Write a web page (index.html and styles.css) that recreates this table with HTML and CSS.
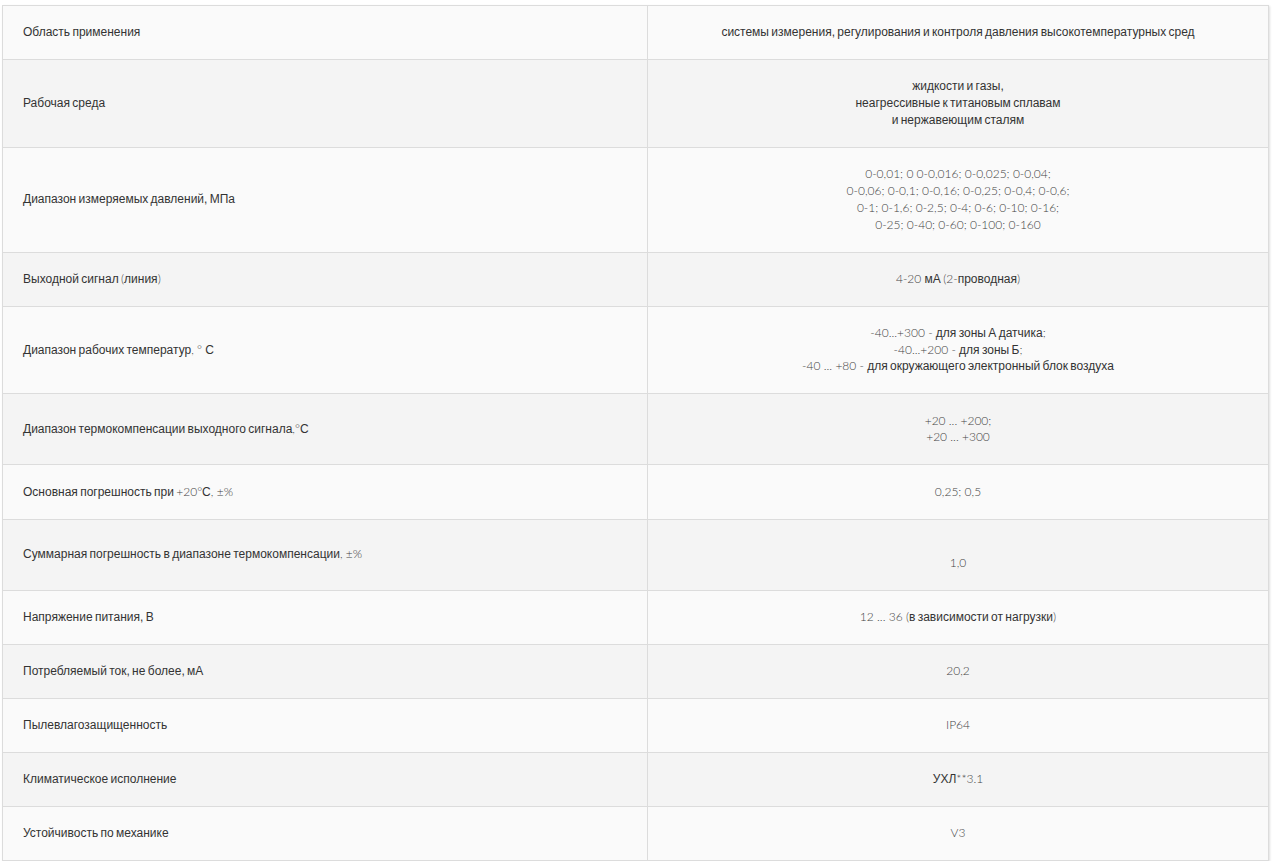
FILE: index.html
```html
<!DOCTYPE html>
<html lang="ru">
<head>
<meta charset="utf-8">
<title>Характеристики</title>
<link rel="stylesheet" href="styles.css">
</head>
<body>
<table class="spec">
<tbody>
<tr><td>Область применения</td><td>системы измерения, регулирования и контроля давления высокотемпературных сред</td></tr>
<tr><td>Рабочая среда</td><td>жидкости и газы,<br>неагрессивные к титановым сплавам<br>и нержавеющим сталям</td></tr>
<tr><td>Диапазон измеряемых давлений, МПа</td><td><span class="n">0-0,01; 0 0-0,016; 0-0,025; 0-0,04;<br>0-0,06; 0-0,1; 0-0,16; 0-0,25; 0-0,4; 0-0,6;<br>0-1; 0-1,6; 0-2,5; 0-4; 0-6; 0-10; 0-16;<br>0-25; 0-40; 0-60; 0-100; 0-160</span></td></tr>
<tr><td>Выходной сигнал <span class="n">(</span>линия<span class="n">)</span></td><td><span class="n">4-20 </span>мА <span class="n">(2-</span>проводная<span class="n">)</span></td></tr>
<tr><td>Диапазон рабочих температур<span class="n">, ° </span>С</td><td><span class="n">-40...+300 - </span>для зоны А датчика<span class="n">;</span><br><span class="n">-40...+200 - </span>для зоны Б<span class="n">;</span><br><span class="n">-40 ... +80 - </span>для окружающего электронный блок воздуха</td></tr>
<tr><td>Диапазон термокомпенсации выходного сигнала<span class="n">,°</span>С</td><td><span class="n">+20 ... +200;<br>+20 ... +300</span></td></tr>
<tr><td>Основная погрешность при <span class="n">+20°</span>С<span class="n">, ±%</span></td><td><span class="n">0,25; 0,5</span></td></tr>
<tr><td>Суммарная погрешность в диапазоне термокомпенсации<span class="n">, ±%</span></td><td><br><span class="n">1,0</span></td></tr>
<tr><td>Напряжение питания, В</td><td><span class="n">12 ... 36 (</span>в зависимости от нагрузки<span class="n">)</span></td></tr>
<tr><td>Потребляемый ток, не более, мА</td><td><span class="n">20,2</span></td></tr>
<tr><td>Пылевлагозащищенность</td><td><span class="n">IP64</span></td></tr>
<tr><td>Климатическое исполнение</td><td>УХЛ<span class="n">**3.1</span></td></tr>
<tr><td>Устойчивость по механике</td><td><span class="n">V3</span></td></tr>
</tbody>
</table>
</body>
</html>
```

FILE: styles.css
```css
html, body {
  margin: 0;
  padding: 0;
  background: #ffffff;
}

body {
  padding: 5px 3px 0 2px;
  font-family: "Liberation Sans", Arial, sans-serif;
  font-size: 12px;
  line-height: 16.8px;
  color: #333333;
}

.spec {
  width: 100%;
  border-collapse: collapse;
  border: 1px solid #dcdcdc;
  box-shadow: 1px 1px 2px rgba(0, 0, 0, 0.12);
}

.spec td {
  border: 1px solid #dcdcdc;
  padding: 18.2px 20px;
  vertical-align: middle;
  word-spacing: -1px;
}

.spec td:first-child {
  width: 604px;
  text-align: left;
}

.spec td:last-child {
  text-align: center;
}

.spec tr:nth-child(odd) td {
  background: #fafafa;
}

.spec tr:nth-child(even) td {
  background: #f4f4f4;
}

.n {
  font-family: Lato, "Liberation Sans", sans-serif;
  font-weight: 300;
  line-height: 12px;
  color: #444444;
  word-spacing: 0;
}
```
